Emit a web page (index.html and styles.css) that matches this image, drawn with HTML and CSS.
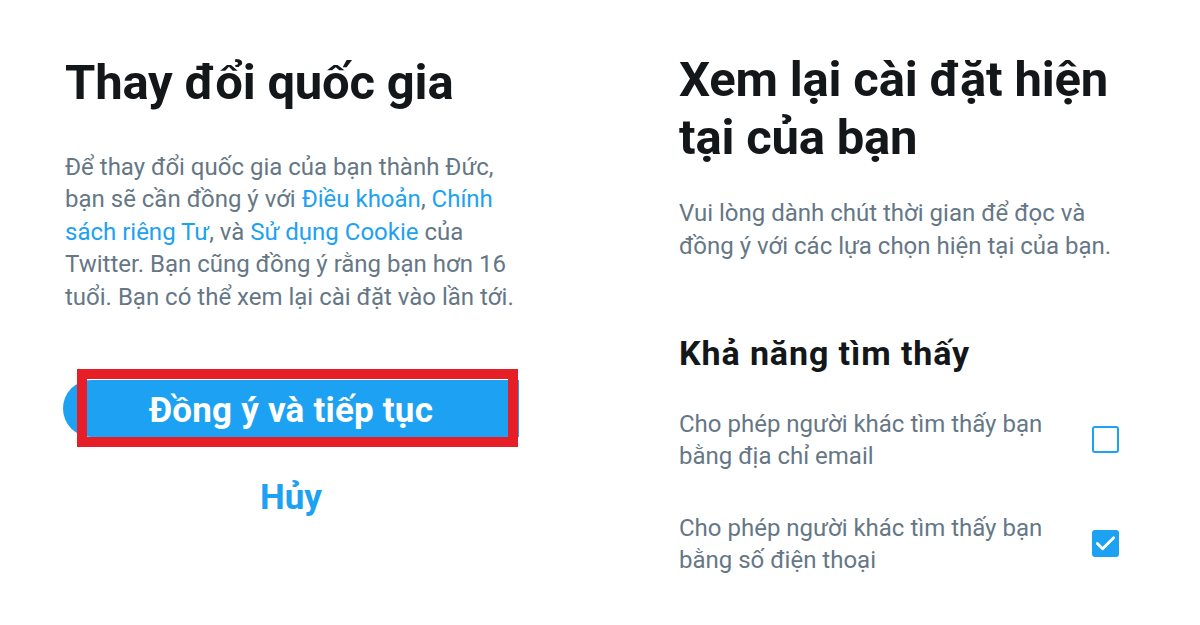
FILE: index.html
```html
<!DOCTYPE html>
<html lang="vi">
<head>
<meta charset="utf-8">
<link rel="stylesheet" href="styles.css">
</head>
<body>
<div class="page">
  <section class="col left">
    <h1 class="title">Thay đổi quốc gia</h1>
    <p class="text">Để thay đổi quốc gia của bạn thành Đức,<br>bạn sẽ cần đồng ý với <span class="link">Điều khoản</span>, <span class="link">Chính</span><br><span class="link">sách riêng Tư</span>, và <span class="link">Sử dụng Cookie</span> của<br>Twitter. Bạn cũng đồng ý rằng bạn hơn 16<br>tuổi. Bạn có thể xem lại cài đặt vào lần tới.</p>
    <div class="btn-wrap">
      <div class="btn"><span class="btn-label">Đồng ý và tiếp tục</span></div>
      <div class="mark"></div>
    </div>
    <div class="cancel">Hủy</div>
  </section>
  <section class="col right">
    <h1 class="title">Xem lại cài đặt hiện<br>tại của bạn</h1>
    <p class="text">Vui lòng dành chút thời gian để đọc và<br>đồng ý với các lựa chọn hiện tại của bạn.</p>
    <h2 class="subtitle">Khả năng tìm thấy</h2>
    <div class="row">
      <div class="row-text">Cho phép người khác tìm thấy bạn<br>bằng địa chỉ email</div>
      <div class="box"></div>
    </div>
    <div class="row">
      <div class="row-text">Cho phép người khác tìm thấy bạn<br>bằng số điện thoại</div>
      <div class="box checked">
        <svg viewBox="0 0 24 24" width="24" height="24"><path d="M3.5 12.5l5.5 5.5L20.5 6.5" fill="none" stroke="#fff" stroke-width="3" stroke-linecap="round" stroke-linejoin="round"/></svg>
      </div>
    </div>
  </section>
</div>
</body>
</html>
```
FILE: styles.css
```css
html, body {
  margin: 0;
  padding: 0;
  background: #fff;
}
body {
  font-family: Roboto, "Noto Sans", sans-serif;
  width: 1200px;
  height: 625px;
  overflow: hidden;
}
.page {
  display: grid;
  grid-template-columns: 614px 1fr;
}
.col.left {
  padding: 0 0 0 65px;
}
.col.right {
  padding: 0 40px 0 65px;
}
.title {
  font-weight: 700;
  font-size: 49px;
  line-height: 58px;
  color: #14171a;
  margin: 54px 0 0;
  letter-spacing: -0.2px;
  white-space: nowrap;
}
.right .title {
  margin-top: 51px;
}
.text {
  font-size: 24px;
  color: #657786;
  white-space: nowrap;
}
.left .text {
  line-height: 32.5px;
  margin: 38.5px 0 0;
}
.right .text {
  line-height: 33px;
  margin: 30px 0 0;
}
.link {
  color: #1da1f2;
}
.btn-wrap {
  position: relative;
  margin: 67px 0 0 -2px;
  width: 456px;
}
.btn {
  height: 57px;
  background: #1da1f2;
  border-radius: 29px 0 0 29px;
  display: flex;
  align-items: center;
  justify-content: center;
  padding-top: 3px;
  box-sizing: border-box;
}
.btn-label {
  color: #fff;
  font-weight: 700;
  font-size: 35px;
  letter-spacing: 0.2px;
}
.mark {
  position: absolute;
  left: 14px;
  top: -11px;
  width: 421px;
  height: 58px;
  border: 10px solid #e61e27;
}
.cancel {
  margin: 39.5px 0 0 -2px;
  width: 456px;
  text-align: center;
  color: #1da1f2;
  font-weight: 700;
  font-size: 35px;
  line-height: 41px;
}
.subtitle {
  font-weight: 700;
  font-size: 34px;
  line-height: 40px;
  letter-spacing: 0.9px;
  color: #14171a;
  margin: 70px 0 0;
}
.row {
  display: flex;
  align-items: center;
  justify-content: space-between;
  margin-top: 35px;
  width: 440px;
}
.row + .row {
  margin-top: 40px;
}
.row-text {
  font-size: 24px;
  line-height: 32px;
  color: #657786;
  white-space: nowrap;
}
.box {
  width: 23px;
  height: 23px;
  border: 2.5px solid #1da1f2;
  border-radius: 3px;
  display: flex;
  align-items: center;
  justify-content: center;
  margin-top: -2px;
}
.box.checked {
  background: #1da1f2;
}
```
